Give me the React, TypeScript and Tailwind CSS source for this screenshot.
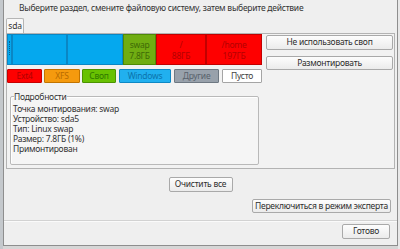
const font = { fontFamily: '"Noto Sans", "Open Sans", sans-serif' };

function Btn({ label, className }: { label: string; className: string }) {
  return (
    <div
      className={`flex items-center justify-center whitespace-nowrap rounded-[2px] border border-[#a9a9a9] bg-gradient-to-b from-[#fdfdfd] to-[#ebebeb] text-[8.5px] leading-none tracking-[-0.25px] text-[#2e2e2e] ${className}`}
    >
      {label}
    </div>
  );
}

function Chip({ label, className }: { label: string; className: string }) {
  return (
    <div className={`flex h-[14px] items-center justify-center rounded-[1px] border text-[8.5px] leading-none tracking-[-0.25px] ${className}`}>
      {label}
    </div>
  );
}

export default function App() {
  return (
    <div className="flex h-[249px] w-[400px] overflow-hidden bg-[#d6d6d6]" style={font}>
      <div className="w-[3px] bg-[#c4c8cc]" />
      <div className="flex h-[246px] w-[395px] flex-col border-x border-b border-[#8e8e8e] bg-[#efefef]">
        <div className="h-[18px] whitespace-nowrap pl-[15px] pt-[2px] text-[8.5px] leading-[12px] tracking-[-0.25px] text-[#333]">
          Выберите раздел, смените файловую систему, затем выберите действие
        </div>

        <div className="ml-[2px] flex">
          <div className="flex h-[15px] w-[18px] items-center justify-center rounded-t-[2px] border border-b-0 border-[#b5b5b5] bg-[#f8f8f8] text-[8.5px] leading-none tracking-[-0.25px] text-[#333]">
            sda
          </div>
        </div>

        <div className="ml-[2px] flex h-[136px] w-[389px] border border-[#b3b3b3] bg-[#f2f2f2]">
          <div className="flex w-[256px] flex-col">
            <div className="flex h-[31px] w-[255px] text-[8.5px] leading-[11px] tracking-[-0.25px]">
              <div className="flex w-[5px] justify-center border border-[#0a86c4] bg-[#05a8ee]">
                <div className="mt-[6px] h-[14px] border-l border-dotted border-[#0a5f8c]" />
              </div>
              <div className="w-[55px] border border-[#0a86c4] bg-[#05a8ee]" />
              <div className="w-[56px] border border-[#0a86c4] bg-[#05a8ee]" />
              <div className="flex w-[33px] flex-col items-center justify-center border border-[#4f8a06] bg-[#70ad12] text-[#3e6a06]">
                <span>swap</span>
                <span>7.8ГБ</span>
              </div>
              <div className="flex w-[50px] flex-col items-center justify-center border border-[#c20000] bg-[#fe0000] text-[#b40000]">
                <span>/</span>
                <span>88ГБ</span>
              </div>
              <div className="flex w-[56px] flex-col items-center justify-center border border-[#c20000] bg-[#fe0000] text-[#b40000]">
                <span>/home</span>
                <span>197ГБ</span>
              </div>
            </div>

            <div className="mt-[4px] flex">
              <Chip label="Ext4" className="w-[35px] border-[#c80000] bg-[#fe0000] text-[#b00000]" />
              <Chip label="XFS" className="ml-[2px] w-[36px] border-[#c27400] bg-[#f59a0e] text-[#b86a00]" />
              <Chip label="Своп" className="ml-[2px] w-[34px] border-[#4b9400] bg-[#68c102] text-[#2f7800]" />
              <Chip label="Windows" className="ml-[3px] w-[52px] border-[#0d88c4] bg-[#21b0ef] text-[#0b74ac]" />
              <Chip label="Другие" className="ml-[3px] w-[45px] border-[#6e7882] bg-[#98a1ab] text-[#58626c]" />
              <Chip label="Пусто" className="ml-[3px] w-[40px] border-[#a5a5a5] bg-white text-[#444]" />
            </div>

            <fieldset className="ml-[3px] mt-[8px] h-[74px] w-[249px] rounded-[2px] border border-[#b9b9b9] bg-[#f5f5f5] pl-[2px] shadow-[inset_1px_1px_0_#ffffff]">
              <legend className="ml-[1px] text-[8.5px] leading-[11px] tracking-[-0.25px] text-[#333]">Подробности</legend>
              <div className="mt-[2px] text-[8.5px] leading-[10px] tracking-[-0.25px] text-[#333]">
                <div>Точка монтирования: swap</div>
                <div>Устройство: sda5</div>
                <div>Тип: Linux swap</div>
                <div>Размер: 7.8ГБ (1%)</div>
                <div>Примонтирован</div>
              </div>
            </fieldset>
          </div>

          <div className="ml-[3px] flex w-[127px] flex-col">
            <Btn label="Не использовать своп" className="mt-[1px] h-[15px]" />
            <Btn label="Размонтировать" className="mt-[6px] h-[14px]" />
          </div>
        </div>

        <div className="mt-[8px] flex justify-center">
          <Btn label="Очистить все" className="h-[15px] w-[64px]" />
        </div>

        <div className="mt-[7px] flex justify-end pr-[6px]">
          <Btn label="Переключиться в режим эксперта" className="h-[14px] w-[139px]" />
        </div>

        <div className="mt-[7px] h-[2px] border-t border-[#d2d2d2] bg-[#fafafa]" />

        <div className="mt-[2px] flex justify-end pr-[7px]">
          <Btn label="Готово" className="h-[15px] w-[48px]" />
        </div>
      </div>
      <div className="w-[2px] bg-[#e8e8e8]" />
    </div>
  );
}
